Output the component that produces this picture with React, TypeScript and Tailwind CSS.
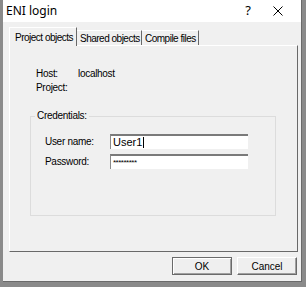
import React from "react";

const font = { fontFamily: '"Liberation Sans", Arial, sans-serif' };

export default function App() {
  return (
    <div className="w-[306px] h-[287px] bg-[#8a8a8a] overflow-hidden" style={font}>
      <div className="ml-[3px] w-[299px] h-[282px] bg-[#f0f0f0] flex flex-col border-r border-b border-[#6a6a6a]">
        {/* title bar */}
        <div className="h-[22px] bg-white flex items-center text-[12px] text-black shrink-0">
          <span className="ml-[3px]" style={{ fontFamily: '"Noto Sans", "Liberation Sans", sans-serif' }}>ENI login</span>
          <span className="ml-auto mr-[22px] text-[13px]" style={{ fontFamily: '"Noto Sans", sans-serif' }}>?</span>
          <svg width="10" height="10" viewBox="0 0 10 10" className="mr-[18px]">
            <path d="M0.5 0.5 L9.5 9.5 M9.5 0.5 L0.5 9.5" stroke="#000" strokeWidth="1" />
          </svg>
        </div>
        {/* tabs */}
        <div className="ml-[6px] mt-[5px] flex items-end h-[18px] text-[10px] tracking-[-0.5px] text-black relative z-10 whitespace-nowrap shrink-0">
          <div className="h-[19px] w-[68px] bg-[#f0f0f0] border-l border-t border-white border-r-[#696969] border-r flex items-center pl-[5px] -mb-[1px]">
            Project objects
          </div>
          <div className="h-[15px] w-[65px] border-t border-white border-r border-r-[#696969] flex items-center pl-[3px]">
            Shared objects
          </div>
          <div className="h-[15px] w-[57px] border-t border-white border-r border-r-[#696969] flex items-center pl-[3px]">
            Compile files
          </div>
        </div>
        {/* panel */}
        <div className="ml-[6px] w-[289px] h-[207px] border-l border-t border-white border-r-[#696969] border-b-[#696969] border-r border-b text-[10px] tracking-[-0.3px] text-black whitespace-nowrap shrink-0">
          <div className="pl-[26px] pt-[21px] flex flex-col gap-[1px]">
            <div className="flex h-[13px] items-center">
              <span className="w-[42px]">Host:</span>
              <span>localhost</span>
            </div>
            <div className="flex h-[13px] items-center">
              <span>Project:</span>
            </div>
          </div>
          <div className="ml-[20px] mt-[22px] w-[246px] h-[100px] border border-[#dcdcdc] relative">
            <span className="absolute -top-[8px] left-[4px] px-[2px] bg-[#f0f0f0] leading-[14px]">Credentials:</span>
            <div className="pl-[14px] pt-[17px] flex flex-col gap-[5px]">
              <div className="flex items-center">
                <span className="w-[65px]">User name:</span>
                <div className="w-[138px] h-[15px] bg-white border-t-2 border-l border-t-[#7a7a7a] border-l-[#8a8a8a] flex items-center pl-[2px] leading-none text-[11px] tracking-normal">
                  User1<span className="inline-block w-[1px] h-[11px] bg-black ml-[1px]" />
                </div>
              </div>
              <div className="flex items-center">
                <span className="w-[65px]">Password:</span>
                <div className="w-[138px] h-[15px] bg-white border-t-2 border-l border-t-[#7a7a7a] border-l-[#8a8a8a] flex items-center pl-[2px] text-[8px] leading-none tracking-[-0.5px]">
                  *********
                </div>
              </div>
            </div>
          </div>
        </div>
        {/* buttons */}
        <div className="flex justify-end gap-[5px] mr-[4px] mt-[5px] text-[10px] text-black">
          <button className="w-[60px] h-[18px] bg-[#efefef] border border-[#6a6a6a] shadow-[inset_1px_1px_0_#fff,inset_-1px_-1px_0_#a0a0a0] flex items-center justify-center">
            OK
          </button>
          <button className="w-[60px] h-[18px] bg-[#efefef] border-t border-l border-white border-r border-b border-r-[#6a6a6a] border-b-[#6a6a6a] shadow-[inset_-1px_-1px_0_#a0a0a0] flex items-center justify-center">
            Cancel
          </button>
        </div>
      </div>
    </div>
  );
}
